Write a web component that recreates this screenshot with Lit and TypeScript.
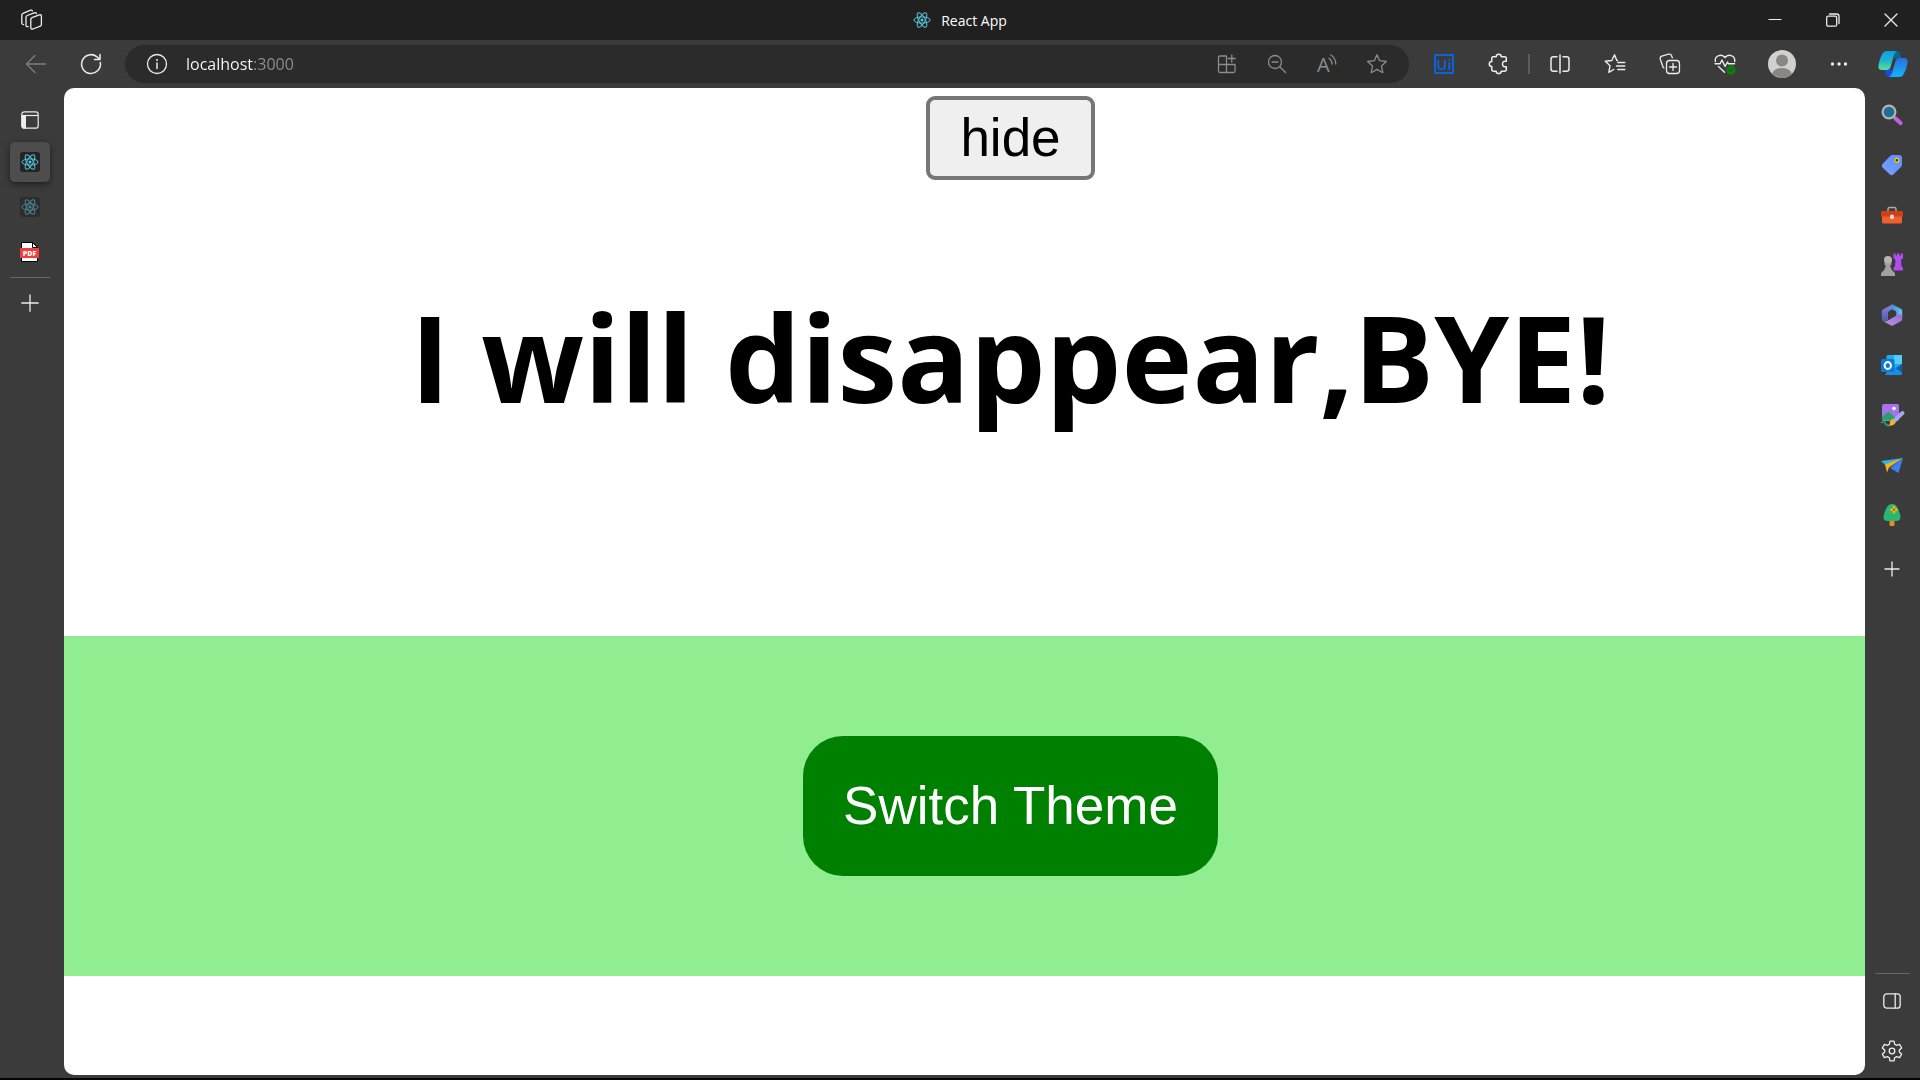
import { LitElement, html, css, svg } from "lit";
import { customElement, state } from "lit/decorators.js";

const react = (size: number) => html`<svg width=${size} height=${size} viewBox="0 0 20 20" fill="none" stroke="#58c4dc" stroke-width="1.1" aria-hidden="true">
  <ellipse cx="10" cy="10" rx="9" ry="3.5" />
  <ellipse cx="10" cy="10" rx="9" ry="3.5" transform="rotate(60 10 10)" />
  <ellipse cx="10" cy="10" rx="9" ry="3.5" transform="rotate(120 10 10)" />
  <circle cx="10" cy="10" r="1.7" fill="#58c4dc" stroke="none" />
</svg>`;

const line = (w: number, h: number, body: unknown) => html`<svg width=${w} height=${h} viewBox="0 0 ${w} ${h}" fill="none" stroke="currentColor" stroke-width="1.3" stroke-linecap="round" stroke-linejoin="round" aria-hidden="true">${body}</svg>`;

const icons = {
  workspaces: line(22, 22, svg`<path d="M11 8.6 18.3 5.9Q20.4 5.3 20.4 7V15.4Q20.4 16.6 19.3 17.1L12 20Q9.8 20.6 9.8 18.9V10.2Q9.8 9.1 11 8.6Z"/><path d="M7.2 17.6Q5 18 5 16.4V8.2Q5 7 6.2 6.5L13.2 3.8Q15 3.3 15.4 4.6"/><path d="M2.6 15.6Q.8 15.4 .8 14V6Q.8 4.8 2 4.3L9 1.4Q10.8.8 11.4 2"/>`),
  back: line(22, 20, svg`<path d="M20.500 10H1.500M10 1.500 1.500 10 10 18.500"/>`),
  refresh: line(22, 22, svg`<path stroke-width="1.500" d="M20.300 9.500A9.400 9.400 0 1 1 17 3.800L20 6.500M20 1.500V6.500H14.500"/>`),
  info: line(22, 22, svg`<circle cx="11" cy="11" r="9.500"/><path d="M11 10V15.500" stroke-width="1.500"/><circle cx="11" cy="6.900" r="1" fill="currentColor" stroke="none"/>`),
  apps: line(20, 20, svg`<path d="M9.500 2H3Q1.500 2 1.500 3.500V17Q1.500 18.500 3 18.500H16.500Q18 18.500 18 17V10.500H1.500M9.500 2V18.500M14.800 1V8M11.300 4.500H18.300"/>`),
  zoomOut: line(20, 20, svg`<circle cx="8" cy="8" r="6.500"/><path d="M12.800 12.800 18.500 18.500M5 8H11"/>`),
  readAloud: html`<svg width="22" height="22" viewBox="0 0 22 22" fill="none" stroke="currentColor" stroke-width="1.300" stroke-linecap="round" aria-hidden="true"><text x="1" y="19" font-family="Open Sans, sans-serif" font-weight="400" font-size="20" fill="currentColor" stroke="none">A</text><path d="M13 5.200Q15.800 7 16 11M14.800 2Q19.600 4.800 19.800 11"/></svg>`,
  star: line(22, 22, svg`<path d="M11 1.800 13.700 7.700 20.400 8.500 15.500 13 16.800 19.700 11 16.400 5.200 19.700 6.500 13 1.600 8.500 8.300 7.700Z"/>`),
  uiTool: html`<svg width="20" height="20" viewBox="0 0 20 20" aria-hidden="true"><rect x="1" y="1" width="18" height="18" fill="none" stroke="#0a63dc" stroke-width="2"/><text x="10" y="15.500" text-anchor="middle" font-family="Open Sans, sans-serif" font-weight="600" font-size="15" fill="#0a63dc">Ui</text></svg>`,
  puzzle: line(22, 22, svg`<path stroke-width="1.500" d="M5 3.800H8.200Q8.200 1.300 10.700 1.300T13.200 3.800H16.500Q18.300 3.800 18.300 5.500V8.300Q14.500 7.800 14.500 11T18.300 13.700V16.500Q18.300 18.200 16.500 18.200H13.200Q13.200 20.600 10.700 20.600T8.200 18.200H5.500Q3.800 18.200 3.800 16.500V13.500Q1.300 13.500 1.300 11T3.800 8.500V5.500Q3.800 3.800 5 3.800Z"/>`),
  split: line(20, 20, svg`<path stroke-width="1.500" d="M7 2.800H3.500Q1 2.800 1 5.300V14.700Q1 17.200 3.500 17.200H7M13 2.800H16.500Q19 2.800 19 5.300V14.700Q19 17.200 16.500 17.200H13M10 1V19"/>`),
  favorites: line(22, 22, svg`<path stroke-width="1.400" d="M13.500 7.500H12.800L10.500 1.800 7.800 7.500 1.300 8.300 6 12.800 4.800 19.300 9.800 16.500M13.800 9.500H20.800M12.500 13H20.800M13.800 16.500H20.800"/>`),
  collections: line(22, 22, svg`<rect x="7.500" y="7.500" width="13" height="13" rx="3"/><path d="M14 10.500V17.500M10.500 14H17.500M5 15 4.200 14.500 1.300 6.200Q.8 4 2.800 3.200L9.500 1.200Q12 .8 12.700 3L13.300 4.800"/>`),
  heart: html`<svg width="22" height="22" viewBox="0 0 22 22" fill="none" stroke="currentColor" stroke-width="1.400" stroke-linecap="round" stroke-linejoin="round" aria-hidden="true"><path d="M1.300 8.500C.5 2 8 .5 11 4.500 14 .5 21.500 2 20.700 8.500M1 10.800H6L8 7 11 13.500 13.500 9 14.500 10.800H20.500M4.500 13.500 10.500 19.300"/><circle cx="17" cy="17" r="4.700" fill="#107c10" stroke="none"/><path d="M14.800 17.200 16.400 18.700 19.200 15.700" stroke="#1f4a20" stroke-width="1"/></svg>`,
  avatar: html`<svg width="28" height="28" viewBox="0 0 28 28" aria-hidden="true"><circle cx="14" cy="14" r="14" fill="#d2d0ce"/><circle cx="14" cy="10.500" r="6" fill="#8a8683"/><path d="M4 23.800Q6.500 18 14 18T24 23.800Q19.700 28 14 28T4 23.800Z" fill="#8a8683"/></svg>`,
  dots: html`<svg width="18" height="6" viewBox="0 0 18 6" fill="currentColor" aria-hidden="true"><circle cx="2.500" cy="3" r="1.700"/><circle cx="9" cy="3" r="1.700"/><circle cx="15.500" cy="3" r="1.700"/></svg>`,
  copilot: html`<svg width="30" height="28" viewBox="0 0 30 28" aria-hidden="true">
    <defs>
      <linearGradient id="cpA" x1="0" y1="0" x2="0" y2="1"><stop offset="0" stop-color="#0f9fe0"/><stop offset=".5" stop-color="#1cb4cf"/><stop offset="1" stop-color="#5fdf92"/></linearGradient>
      <linearGradient id="cpB" x1="0" y1="0" x2="0" y2="1"><stop offset="0" stop-color="#2a6fdc"/><stop offset="1" stop-color="#10b4f8"/></linearGradient>
    </defs>
    <path d="M15 1H19Q21.500 1 22.300 4L23.500 8.500H16Z" fill="#0a6590"/>
    <path d="M15 27H11Q8.500 27 7.700 24L6.500 19.500H14Z" fill="#1b4bdc"/>
    <path d="M9 1H19Q17 2 16 5L12.500 17Q11.500 20 8.500 20H4Q-.5 20 .6 14.500 1.500 9 4 4.500 5.500 1 9 1Z" fill="url(#cpA)"/>
    <path d="M21 27H11Q13 26 14 23L17.500 11Q18.500 8 21.500 8H26Q30.500 8 29.400 13.500 28.500 19 26 23.500 24.500 27 21 27Z" fill="url(#cpB)"/>
  </svg>`,
  minimize: line(14, 14, svg`<path stroke-width="1" stroke-linecap="butt" d="M.5 6.500H13.500"/>`),
  restore: line(14, 14, svg`<rect x=".7" y="3.200" width="10" height="10" rx="1.500"/><path d="M3.500 1H10.500Q13 1 13 3.500V10.500"/>`),
  close: line(14, 14, svg`<path d="M1 1 13 13M13 1 1 13"/>`),
  tabPane: html`<svg width="18" height="18" viewBox="0 0 18 18" fill="none" stroke="currentColor" stroke-width="1.200" aria-hidden="true"><rect x=".8" y=".8" width="16.400" height="16.400" rx="2.500"/><path d="M.8 4.500H17"/><path d="M.5 4.500H5V17.500H3Q.5 17.500 .5 15Z" fill="currentColor" stroke="none"/></svg>`,
  pdf: html`<svg width="20" height="20" viewBox="0 0 20 20" aria-hidden="true"><path d="M1.500.5H13L17.500 5V19.500H1.500Z" fill="#fff" stroke="#000"/><path d="M12.500.5V5.500H17.500Z" fill="#fff" stroke="#000"/><rect x="0" y="6" width="19" height="10" fill="#f03e3e"/><text x="9.500" y="13.500" text-anchor="middle" font-family="Open Sans, sans-serif" font-weight="800" font-size="7" fill="#fff">PDF</text></svg>`,
  plus: line(18, 18, svg`<path d="M9 .8V17.200M.8 9H17.200"/>`),
  plusSmall: line(16, 16, svg`<path d="M8 1V15M1 8H15"/>`),
  panel: line(18, 16, svg`<rect x=".8" y=".8" width="16.400" height="14.400" rx="3"/><path d="M12.200 1V15"/>`),
  gear: line(22, 22, svg`<path d="M9 1.200H13L13.700 4.300 15.600 5.400 18.600 4.400 20.600 7.900 18.300 10V12L20.600 14.100 18.600 17.600 15.600 16.600 13.700 17.700 13 20.800H9L8.300 17.700 6.400 16.600 3.400 17.600 1.400 14.100 3.700 12V10L1.400 7.900 3.400 4.400 6.400 5.400 8.300 4.300Z"/><circle cx="11" cy="11" r="2.800"/>`),
};

const apps = [
  { name: "Search", icon: html`<svg width="22" height="22" viewBox="0 0 22 22" aria-hidden="true"><path d="M14.500 14.500 19.500 19" stroke="#c45cf0" stroke-width="4.200" stroke-linecap="round"/><path d="M12 12 14.500 14.500" stroke="#999" stroke-width="2"/><circle cx="8" cy="8" r="6.400" fill="#1e6f94" stroke="#b5b3b1" stroke-width="2.200"/></svg>` },
  { name: "Shopping", icon: html`<svg width="22" height="22" viewBox="0 0 22 22" aria-hidden="true"><defs><linearGradient id="tag" x1="1" y1="0" x2="0" y2="1"><stop offset="0" stop-color="#5b8df8"/><stop offset="1" stop-color="#7da0ff"/></linearGradient></defs><path d="M11.500 1H18.500Q21 1 21 3.500V10.500Q21 12 20 13L12.500 20.300Q10.500 22 8.700 20.300L1.500 13.500Q0 11.800 1.500 10L9.300 2Q10.300 1 11.500 1Z" fill="url(#tag)"/><circle cx="15.800" cy="6.200" r="2" fill="#333" stroke="#f2c811" stroke-width="1.400"/></svg>` },
  { name: "Tools", icon: html`<svg width="22" height="22" viewBox="0 0 22 22" aria-hidden="true"><path d="M7 8V5Q7 3.500 8.500 3.500H13.500Q15 3.500 15 5V8" fill="none" stroke="#aaa" stroke-width="1.500"/><path d="M1 12H21V18Q21 19.500 19.500 19.500H2.500Q1 19.500 1 18Z" fill="#f0602f"/><path d="M1.500 7H20.500Q22 7 22 8.500V12.500H0V8.500Q0 7 1.500 7Z" fill="#d03e14"/><rect x="9" y="10.500" width="4" height="4.500" rx="1.800" fill="#ddd"/></svg>` },
  { name: "Games", icon: html`<svg width="22" height="24" viewBox="0 0 22 24" aria-hidden="true"><path d="M12.500.5H14.500V2.500H16V.5H18.500V2.500H20V.5H22V5L20 7 20.500 13 22 15V17.500H12.500V15L14 13 14.500 7 12.500 5Z" fill="#b04cf0"/><circle cx="7" cy="7" r="4" fill="#b5b5b5"/><path d="M3.500 10H10.500V12H9.300Q9.500 16.500 13 19Q14.500 20.500 14 23H0Q-.5 20.500 1 19 4.500 16.500 4.700 12H3.500Z" fill="#a3a1a0"/></svg>` },
  { name: "Microsoft 365", icon: html`<svg width="22" height="22" viewBox="0 0 22 22" aria-hidden="true"><defs><linearGradient id="mA" x1="0" y1="0" x2="0" y2="1"><stop offset="0" stop-color="#8f7fe0"/><stop offset="1" stop-color="#4c5fa8"/></linearGradient><linearGradient id="mB" x1="0" y1="0" x2="1" y2="1"><stop offset="0" stop-color="#3f86d8"/><stop offset="1" stop-color="#6fd0f8"/></linearGradient><linearGradient id="mC" x1="0" y1="1" x2="1" y2="0"><stop offset="0" stop-color="#c88fe0"/><stop offset="1" stop-color="#8a70d8"/></linearGradient></defs><path d="M11 .5 1.800 5.500Q.8 6.200.8 7.500V15Q.8 16.300 2 17L7 16.500V8.700Q7 7.700 7.900 7.200L12.500 4.500V.9Q11.800.2 11 .5Z" fill="url(#mA)"/><path d="M10 .9Q11 .2 12.500.9L20 4.700Q21.200 5.400 21.200 6.700V12.500L15.500 11V8.500Q15.500 7.500 14.600 7L9.500 4.200Z" fill="url(#mB)"/><path d="M21.200 11V15.300Q21.200 16.500 20.200 17.100L12.500 21.300Q11 22 9.500 21.300L2 17Q5 17.800 7 16.400L14.600 12Q15.500 11.400 15.500 9.500Z" fill="url(#mC)"/></svg>` },
  { name: "Outlook", icon: html`<svg width="22" height="22" viewBox="0 0 22 22" aria-hidden="true"><rect x="5.500" y="1" width="15.500" height="18" rx="1.500" fill="#28a8ea"/><path d="M13 1H21V10H13Z" fill="#50d0f8"/><path d="M4 20 21 10V19.500Q21 21 19.500 21H5Q4 21 4 20Z" fill="#1490df"/><path d="M15 14 21 10V19Z" fill="#0f5fa8"/><rect x="0" y="5" width="13.500" height="13" rx="1.500" fill="#0f78d4"/><ellipse cx="6.800" cy="11.500" rx="3.200" ry="3.500" fill="none" stroke="#fff" stroke-width="1.900"/></svg>` },
  { name: "Image Creator", icon: html`<svg width="24" height="24" viewBox="0 0 24 24" aria-hidden="true"><rect x="2" y="1" width="17" height="17" rx="2" fill="#a873ea"/><path d="M2 14 8.500 8.500 16 15V17H3Q2 17 2 16Z" fill="#22a565"/><circle cx="14" cy="5.500" r="1.800" fill="#fff"/><path d="M1 20Q4.500 17.500 5 20T9 22.500" fill="none" stroke="#23a867" stroke-width="1.500"/><path d="M22.500 10 14.500 17.500" stroke="#a9a4f5" stroke-width="4" stroke-linecap="round"/><path d="M12 16Q15.500 17 15.500 20 13 23.500 8.500 22.500 10.500 20.500 10 18.500Z" fill="#f4b41f"/></svg>` },
  { name: "Drop", icon: html`<svg width="22" height="18" viewBox="0 0 22 18" aria-hidden="true"><path d="M22 2 0 5 5 9.500 22 2Z" fill="#2fb4e8"/><path d="M22 2 9 12 17.500 17Z" fill="#3d80ef"/><path d="M22 2 4 8.500 6 16.500 8 11.500Z" fill="#f5b020"/></svg>` },
  { name: "Tree", icon: html`<svg width="20" height="24" viewBox="0 0 20 24" aria-hidden="true"><rect x="7.500" y="14" width="5" height="9" rx="1" fill="#e88c1b"/><path d="M10 1Q14 1 15.500 5 18 10 18.500 13.500 18.500 18 14 18H6Q1 18 1.500 13.500 2 9.500 4.500 5 6.500 1 10 1Z" fill="#2bb673"/><path d="M12 4V9.400M9.300 6.700H14.700" stroke="#f5b218" stroke-width="2.500" stroke-linecap="round"/><circle cx="12" cy="6.700" r="1.200" fill="#c05c16"/></svg>` },
];

@customElement("app-root")
export class AppRoot extends LitElement {
  @state() private concealed = false;
  @state() private dark = false;

  static styles = css`
    :host {
      display: flex;
      flex-direction: column;
      min-height: 100vh;
      box-sizing: border-box;
      border-bottom: 2px solid #050505;
      background: #3b3b3b;
      color: #ececec;
      font-family: "Open Sans", "Noto Sans", sans-serif;
    }
    svg { display: block; flex: none; overflow: visible; }
    button {
      display: flex;
      align-items: center;
      justify-content: center;
      padding: 0;
      border: 0;
      background: none;
      color: inherit;
      font: inherit;
    }
    .titlebar {
      display: grid;
      grid-template-columns: 1fr auto 1fr;
      align-items: center;
      height: 40px;
      background: #202020;
    }
    .workspace { width: 64px; height: 40px; }
    .title { display: flex; align-items: center; gap: 10px; font-size: 14px; color: #fff; }
    .window { display: flex; justify-content: flex-end; }
    .window button { width: 58px; height: 40px; }
    .toolbar { display: flex; align-items: center; height: 48px; }
    .nav, .tools { display: flex; align-items: center; }
    .nav { padding: 0 7px 0 8px; }
    .tools { padding-left: 7px; }
    .tool { width: 55px; height: 40px; }
    .tool.profile { width: 60px; }
    .tool.edge { width: 54px; }
    .faded { color: #7d7d7d; }
    .separator { width: 2px; height: 20px; margin: 0 2px; background: #5c5c5c; }
    .address {
      display: flex;
      flex: 1;
      align-items: center;
      height: 38px;
      min-width: 0;
      padding: 0 7px 0 21px;
      border-radius: 19px;
      background: #2b2b2b;
    }
    .address button { height: 38px; }
    .address input {
      flex: 1;
      min-width: 0;
      margin-left: 18px;
      padding: 0;
      border: 0;
      outline: 0;
      font: inherit;
      font-size: 16px;
      color: transparent;
      background: linear-gradient(90deg, #fff 68px, #8f8f8f 68px);
      background-clip: text;
      -webkit-background-clip: text;
    }
    .action { width: 50px; color: #8c8c8c; }
    .body { display: flex; flex: 1; }
    .tabs {
      display: flex;
      flex-direction: column;
      width: 64px;
      box-sizing: border-box;
      gap: 5px;
      padding: 14px 14px 0 10px;
    }
    .tab { width: 40px; height: 40px; border-radius: 5px; }
    .tab.menu { height: 35px; }
    .tab.active { background: #4d4d4d; box-shadow: 0 2px 6px rgba(0, 0, 0, 0.5); }
    .favicon { padding: 1px; border-radius: 3px; background: #232323; }
    .inactive .favicon { opacity: 0.55; }
    .rule { height: 1px; background: #666; }
    .page {
      flex: 1;
      min-width: 0;
      margin-bottom: 3px;
      overflow: hidden;
      border-radius: 10px;
      background: #fff;
      color: #000;
    }
    .top, .theme { display: flex; flex-direction: column; align-items: center; padding-left: 92px; }
    .top { padding-top: 8px; }
    .hide, .switch { font: 53px/60px "Liberation Sans", Arial, sans-serif; }
    .hide {
      padding: 8px 30px;
      border: 4px solid #767676;
      border-radius: 9px;
      background: #efefef;
      color: #000;
    }
    h1 {
      margin: 92px 0 194px;
      font-size: 120px;
      line-height: 170px;
      font-weight: 700;
      white-space: nowrap;
    }
    .gone { visibility: hidden; }
    .theme { padding-top: 100px; padding-bottom: 100px; background: #90ee90; }
    .theme.dark { background: #222; }
    .switch { padding: 40px; border-radius: 40px; background: #008000; color: #fff; }
    .sidebar { display: flex; flex-direction: column; width: 55px; padding: 2px 0; box-sizing: border-box; }
    .sidebar button { height: 50px; width: 54px; }
    .sidebar .add { margin-top: 4px; }
    .bottom { margin-top: auto; }
    .bottom .rule { margin: 0 10px 2px; }
  `;

  render() {
    return html`
      <header class="titlebar">
        <button class="workspace" aria-label="Workspaces">${icons.workspaces}</button>
        <div class="title">${react(18)}<span>React App</span></div>
        <div class="window">
          <button aria-label="Minimize">${icons.minimize}</button>
          <button aria-label="Restore">${icons.restore}</button>
          <button aria-label="Close">${icons.close}</button>
        </div>
      </header>
      <nav class="toolbar" aria-label="Browser toolbar">
        <div class="nav">
          <button class="tool faded" aria-label="Back">${icons.back}</button>
          <button class="tool" aria-label="Refresh">${icons.refresh}</button>
        </div>
        <div class="address">
          <button aria-label="Site information">${icons.info}</button>
          <input type="text" aria-label="Address" value="localhost:3000" spellcheck="false" />
          <button class="action" aria-label="Apps">${icons.apps}</button>
          <button class="action" aria-label="Zoom out">${icons.zoomOut}</button>
          <button class="action" aria-label="Read aloud">${icons.readAloud}</button>
          <button class="action" aria-label="Add to favorites">${icons.star}</button>
        </div>
        <div class="tools">
          <button class="tool" aria-label="Ui extension">${icons.uiTool}</button>
          <button class="tool" aria-label="Extensions">${icons.puzzle}</button>
          <span class="separator"></span>
          <button class="tool" aria-label="Split screen">${icons.split}</button>
          <button class="tool" aria-label="Favorites">${icons.favorites}</button>
          <button class="tool" aria-label="Collections">${icons.collections}</button>
          <button class="tool" aria-label="Browser essentials">${icons.heart}</button>
          <button class="tool profile" aria-label="Profile">${icons.avatar}</button>
          <button class="tool edge" aria-label="Settings and more">${icons.dots}</button>
          <button class="tool edge" aria-label="Copilot">${icons.copilot}</button>
        </div>
      </nav>
      <div class="body">
        <nav class="tabs" aria-label="Tabs">
          <button class="tab menu" aria-label="Tab actions">${icons.tabPane}</button>
          <button class="tab active" aria-label="React App"><span class="favicon">${react(18)}</span></button>
          <button class="tab inactive" aria-label="React App, second tab"><span class="favicon">${react(18)}</span></button>
          <button class="tab" aria-label="PDF file">${icons.pdf}</button>
          <div class="rule"></div>
          <button class="tab" aria-label="New tab">${icons.plus}</button>
        </nav>
        <main class="page">
          <section class="top">
            <button class="hide" @click=${() => (this.concealed = !this.concealed)}>${this.concealed ? "show" : "hide"}</button>
            <h1 class=${this.concealed ? "gone" : ""}>I will disappear,BYE!</h1>
          </section>
          <section class="theme ${this.dark ? "dark" : ""}">
            <button class="switch" @click=${() => (this.dark = !this.dark)}>Switch Theme</button>
          </section>
        </main>
        <aside class="sidebar" aria-label="Sidebar">
          ${apps.map((a) => html`<button aria-label=${a.name}>${a.icon}</button>`)}
          <button class="add" aria-label="Customize">${icons.plusSmall}</button>
          <div class="bottom">
            <div class="rule"></div>
            <button aria-label="Hide sidebar">${icons.panel}</button>
            <button aria-label="Settings">${icons.gear}</button>
          </div>
        </aside>
      </div>
    `;
  }
}
